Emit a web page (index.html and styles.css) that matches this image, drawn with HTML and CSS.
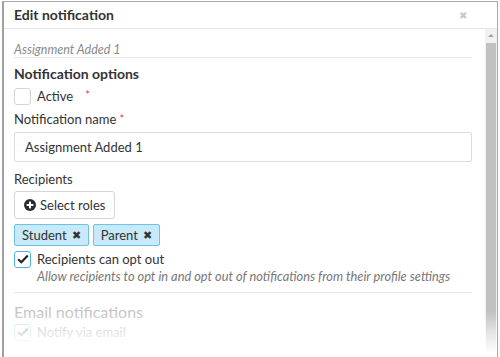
FILE: index.html
```html
<!DOCTYPE html>
<html>
<head>
<meta charset="utf-8">
<link rel="stylesheet" href="styles.css">
</head>
<body>
<div class="modal">
  <div class="modal-header">
    <span class="title">Edit notification</span>
    <span class="close">&#x2716;</span>
  </div>
  <div class="modal-main">
    <div class="content">
      <div class="subtitle">Assignment Added 1</div>
      <div class="section-title">Notification options</div>
      <label class="check-row">
        <span class="box"></span>
        <span class="check-label">Active</span>
        <span class="req req-active">*</span>
      </label>
      <div class="field-label">Notification name <span class="req">*</span></div>
      <div class="input">Assignment Added 1</div>
      <div class="field-label recip">Recipients</div>
      <div class="btn">
        <svg class="plus" width="12" height="12" viewBox="0 0 12 12"><circle cx="6" cy="6" r="6" fill="#2b2b2b"/><rect x="5" y="2.6" width="2" height="6.8" fill="#fff"/><rect x="2.6" y="5" width="6.8" height="2" fill="#fff"/></svg>
        <span>Select roles</span>
      </div>
      <div class="tags">
        <span class="tag">Student <span class="x">&#x2716;</span></span>
        <span class="tag">Parent <span class="x">&#x2716;</span></span>
      </div>
      <label class="check-row opt">
        <span class="box checked">
          <svg width="12" height="10" viewBox="0 0 12 10"><path d="M1.2 5.2 L4.3 8.2 L10.8 1.6" fill="none" stroke="#222" stroke-width="2.2"/></svg>
        </span>
        <span class="check-label">Recipients can opt out</span>
      </label>
      <div class="help">Allow recipients to opt in and opt out of notifications from their profile settings</div>
      <div class="divider"></div>
      <div class="email-title">Email notifications</div>
      <label class="check-row faded">
        <span class="box checked">
          <svg width="12" height="10" viewBox="0 0 12 10"><path d="M1.2 5.2 L4.3 8.2 L10.8 1.6" fill="none" stroke="#222" stroke-width="2.2"/></svg>
        </span>
        <span class="check-label">Notify via email</span>
      </label>
    </div>
    <div class="scrollbar">
      <div class="arrow"></div>
      <div class="thumb"></div>
    </div>
  </div>
  <div class="fade"></div>
</div>
</body>
</html>
```
FILE: styles.css
```css
html, body {
  margin: 0;
  padding: 0;
  background: #fff;
}
body {
  font-family: Lato, "Open Sans", "Liberation Sans", sans-serif;
  color: #333;
  width: 500px;
  height: 357px;
  overflow: hidden;
}
.modal {
  position: relative;
  margin: 1px 2px 0 2px;
  height: 360px;
  border: 1px solid #a9a9a9;
  border-left: 2px solid #a0a0a0;
  border-bottom: none;
  box-sizing: border-box;
  display: flex;
  flex-direction: column;
  overflow: hidden;
}
.modal-header {
  height: 26px;
  flex: none;
  border-bottom: 1px solid #e6e6e6;
  display: flex;
  align-items: center;
  justify-content: space-between;
  padding: 0 30px 0 10px;
}
.title {
  font-weight: 700;
  font-size: 14px;
  color: #333;
  position: relative;
  top: -1px;
}
.close {
  font-size: 10px;
  color: #c8c8c8;
}
.modal-main {
  flex: 1;
  display: flex;
}
.content {
  flex: 1;
  padding: 0 13px 0 10px;
}
.subtitle {
  margin-top: 13px;
  font-size: 12.5px;
  line-height: 15px;
  font-style: italic;
  color: #8a8a8a;
  border-bottom: 1px solid #e8e8e8;
}
.section-title {
  margin-top: 7px;
  font-size: 14px;
  line-height: 18px;
  font-weight: 700;
  color: #333;
}
.check-row {
  display: flex;
  align-items: center;
  margin-top: 4px;
  height: 18px;
  font-size: 13px;
}
.box {
  width: 15px;
  height: 15px;
  border: 1px solid #d4d4d4;
  border-radius: 3px;
  background: #fff;
  display: flex;
  align-items: center;
  justify-content: center;
  flex: none;
}
.box.checked {
  border-color: #4fb3e0;
  background: #fff;
}
.check-label {
  margin-left: 6px;
  color: #333;
}
.req {
  color: #e0413c;
  font-size: 11px;
  line-height: 1;
  position: relative;
  top: -1px;
}
.req-active {
  margin-left: 12px;
  top: -2px;
}
.field-label {
  margin-top: 5px;
  font-size: 13px;
  line-height: 18px;
  height: 18px;
}
.input {
  margin-top: 4px;
  height: 30px;
  box-sizing: border-box;
  border: 1px solid #dcdcdc;
  border-radius: 2px;
  padding: 0 10px;
  display: flex;
  align-items: center;
  font-size: 13px;
}
.recip {
  margin-top: 8px;
}
.btn {
  margin-top: 3px;
  width: 101px;
  height: 28px;
  box-sizing: border-box;
  border: 1px solid #d6d6d6;
  border-radius: 3px;
  display: flex;
  align-items: center;
  padding-left: 9px;
  font-size: 13px;
}
.btn .plus {
  margin-right: 4px;
}
.tags {
  margin-top: 5px;
  display: flex;
  gap: 4px;
}
.tag {
  height: 22px;
  box-sizing: border-box;
  border: 1px solid #6cc3e6;
  background: #c8e9f8;
  border-radius: 2px;
  padding: 0 7px 0 7px;
  display: flex;
  align-items: center;
  font-size: 13px;
  color: #333;
}
.tag .x {
  font-size: 11px;
  margin-left: 5px;
  color: #333;
}
.opt {
  margin-top: 4px;
}
.help {
  font-size: 12.8px;
  line-height: 16px;
  font-style: italic;
  color: #777;
  margin-left: 23px;
  margin-top: 0;
}
.divider {
  margin-top: 8px;
  border-top: 1px solid #e8e8e8;
}
.email-title {
  margin-top: 9px;
  font-size: 16px;
  line-height: 20px;
  color: #c4c4c4;
}
.faded {
  margin-top: 1px;
  opacity: 0.35;
}
.scrollbar {
  width: 12px;
  flex: none;
  background: #f1f1f1;
  display: flex;
  flex-direction: column;
  align-items: center;
}
.arrow {
  margin-top: 5px;
  width: 0;
  height: 0;
  border-left: 3px solid transparent;
  border-right: 3px solid transparent;
  border-bottom: 3px solid #a3a3a3;
}
.thumb {
  margin-top: 6px;
  width: 10px;
  flex: 1;
  background: #c1c1c1;
}
.fade {
  position: absolute;
  left: 0;
  right: 0;
  bottom: 0;
  height: 50px;
  background: linear-gradient(to bottom, rgba(255,255,255,0) 0%, rgba(255,255,255,0.6) 45%, #fff 85%);
  pointer-events: none;
}
```
